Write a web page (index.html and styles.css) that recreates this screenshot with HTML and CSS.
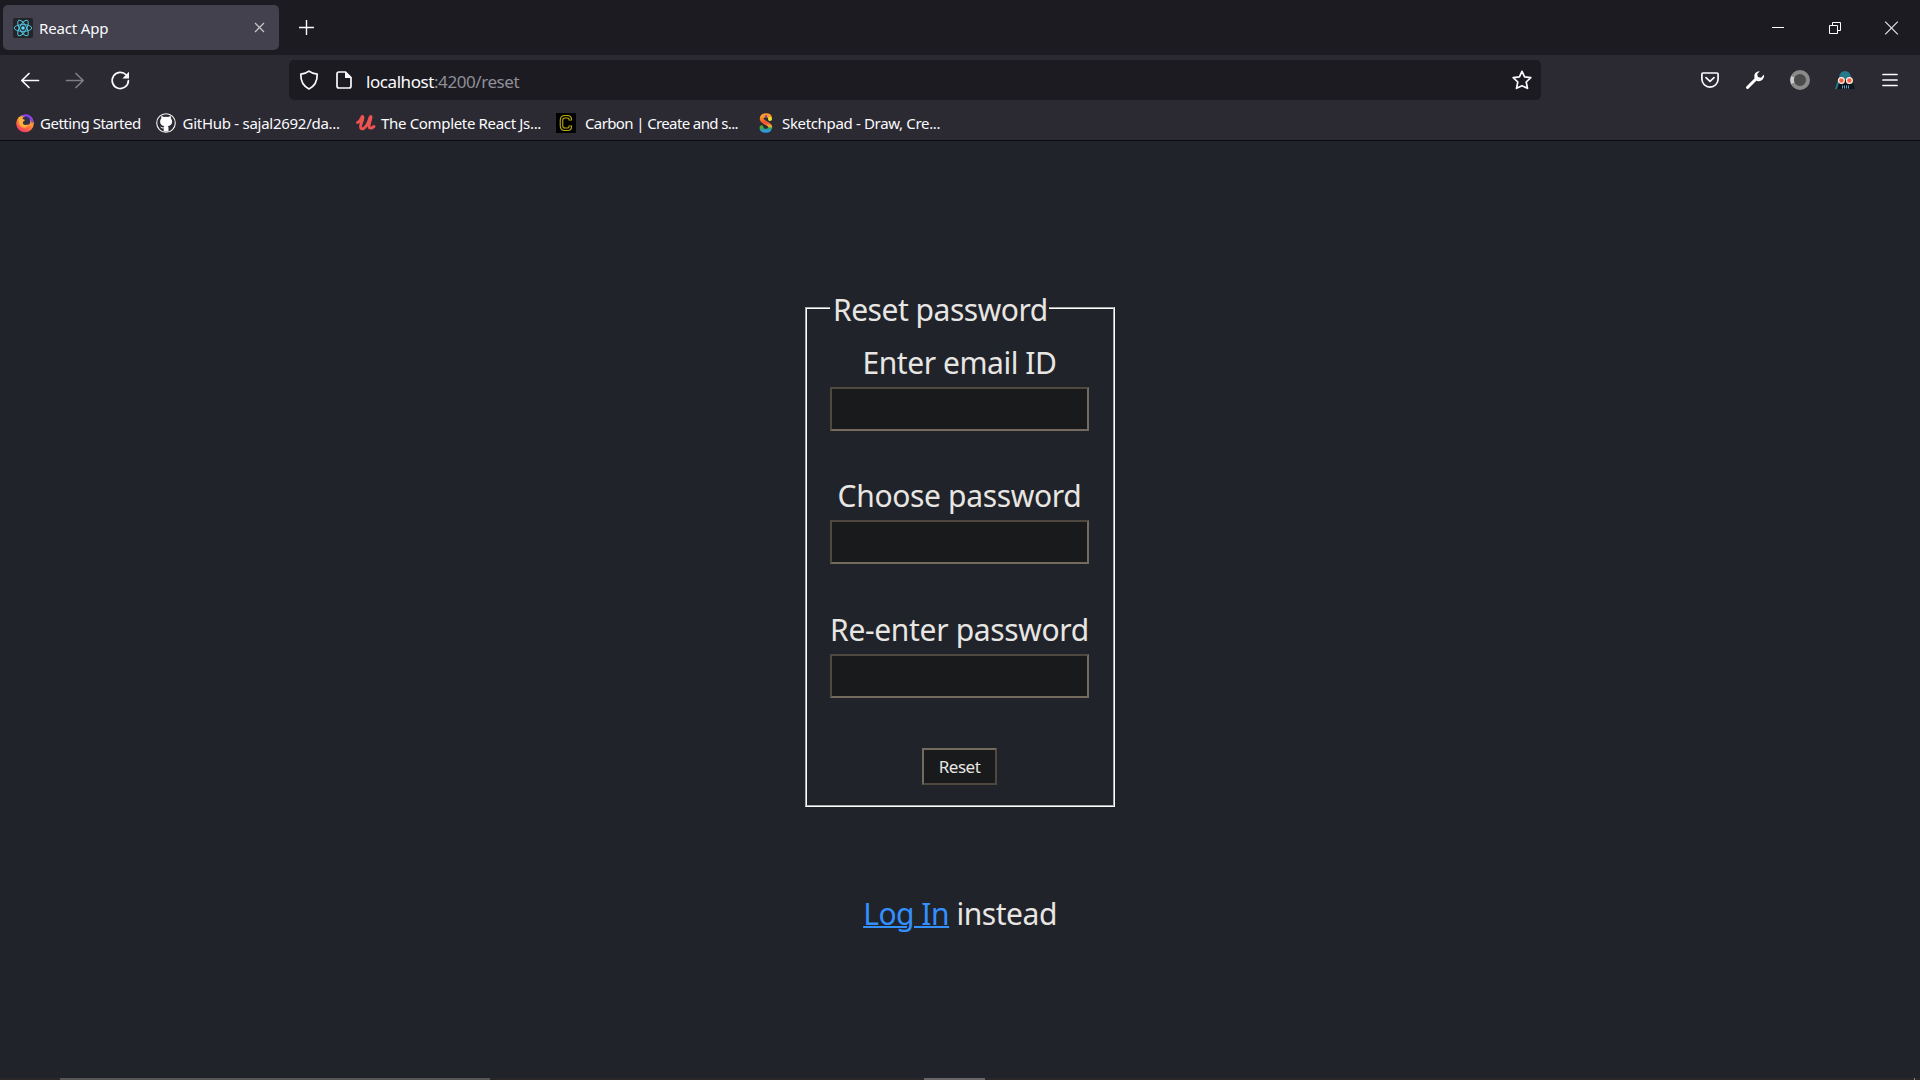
FILE: index.html
```html
<!DOCTYPE html>
<html lang="en">
<head>
<meta charset="utf-8">
<title>React App</title>
<link rel="stylesheet" href="styles.css">
</head>
<body>
<header class="tabs">
  <div class="tab">
    <svg class="i20" viewBox="0 0 20 20"><rect width="20" height="20" rx="2" fill="#222428"/><g fill="none" stroke="#53c1de" stroke-width="1"><ellipse cx="10" cy="10" rx="8.8" ry="3.4"/><ellipse cx="10" cy="10" rx="8.8" ry="3.4" transform="rotate(60 10 10)"/><ellipse cx="10" cy="10" rx="8.8" ry="3.4" transform="rotate(120 10 10)"/></g><circle cx="10" cy="10" r="1.8" fill="#61dafb"/></svg>
    <span class="tab-title">React App</span>
    <svg class="tab-close" viewBox="0 0 11 11"><path d="M1 1l9 9M10 1l-9 9" stroke="#c9c8cf" stroke-width="1.2"/></svg>
  </div>
  <svg class="plus" viewBox="0 0 15 15"><path d="M7.500 0v15M0 7.500h15" stroke="#fbfbfe" stroke-width="1.400"/></svg>
  <div class="window-buttons">
    <svg viewBox="0 0 14 14"><path d="M1 6.500h12" stroke="#fff"/></svg>
    <svg viewBox="0 0 14 14"><path d="M1.500 4.500h8v8h-8zM4.500 4.500v-3h8v8h-3" fill="none" stroke="#fff"/></svg>
    <svg viewBox="0 0 14 14"><path d="M.2 .7l12.600 12.600M12.800 .7L.2 13.300" stroke="#e5e5e8" stroke-width="1.200"/></svg>
  </div>
</header>
<nav class="toolbar">
  <div class="history">
    <svg class="i20" viewBox="0 0 20 20"><path d="M18.500 10.500H2M9 3.500l-7.200 7L9 17.500" class="line"/></svg>
    <svg class="i20 dim" viewBox="0 0 20 20"><path d="M1.500 10.500H18M11 3.500l7.200 7-7.200 7" class="line"/></svg>
    <svg class="i20" viewBox="0 0 20 20"><path d="M16.300 5A8.100 8.100 0 1 0 18.400 10.500" class="line"/><path d="M19 1.800v6.600h-6.600z" fill="#fbfbfe"/></svg>
  </div>
  <div class="url">
    <svg class="i20" viewBox="0 0 20 20"><path d="M10 1.200C7.600 3.200 5 3.800 1.800 4.100C1.600 11 3.800 16 10 18.900C16.200 16 18.400 11 18.200 4.100C15 3.800 12.400 3.200 10 1.200z" class="line"/></svg>
    <svg class="i20 page-icon" viewBox="0 0 20 20"><path d="M5 2h6.500L17 7.500V16a2 2 0 0 1-2 2H5a2 2 0 0 1-2-2V4a2 2 0 0 1 2-2z" class="line"/><path d="M11 1.500V8h6.500z" fill="#fbfbfe"/></svg>
    <span class="address"><b>localhost</b>:4200/reset</span>
    <svg class="i20 star" viewBox="0 0 20 20"><path d="M10 1.300l2.600 5.600 6.200.8-4.600 4.300 1.300 6.300L10 15.800l-5.500 2.500L5.800 12 1.200 7.700l6.200-.8z" class="line"/></svg>
  </div>
  <div class="actions">
    <svg class="i20" viewBox="0 0 20 20"><path d="M3 3h14q1.100 0 1.100 1.100V9a8.100 8.100 0 0 1-16.200 0V4.100Q1.900 3 3 3z" class="line"/><path d="M6 7.700l4 3.700 4-3.700" class="line"/></svg>
    <svg class="i20" viewBox="0 0 20 20"><path d="M2.500 17.500L11 9" stroke="#fff" stroke-width="3" stroke-linecap="round"/><path d="M14.800 1.200a5.200 5.200 0 0 0-5.400 6.700L12 11a5.400 5.400 0 0 0 7-6.500l-3 3.200-3.100-.8-.7-3z" fill="#fff"/></svg>
    <svg class="i20" viewBox="0 0 20 20"><circle cx="10" cy="10" r="8" fill="#4b4b4b" stroke="#8a8a8a" stroke-width="4"/><path d="M2.700 6.800a8 8 0 0 0 0 6.400" fill="none" stroke="#ccc" stroke-width="3.500"/></svg>
    <svg class="i20" viewBox="0 0 20 20"><path d="M4 7L0 19h20L16 7z" fill="#11181d"/><path d="M4 7Q5 1 10 1t6 6v3H4zM3.500 8L0 19h2L5 10z" fill="#28788c"/><path d="M5 13h10l2 6H4z" fill="#0d1720"/><circle cx="6.400" cy="10.500" r="2.900" fill="#f4613f" stroke="#fff3e8" stroke-width="1.200"/><circle cx="14.400" cy="10.500" r="2.900" fill="#f4613f" stroke="#fff3e8" stroke-width="1.200"/><path d="M7.500 15.500v3M9.500 15.500v3M11.500 15.500v3M13.500 15.500v3" stroke="#6eb6c8" stroke-width=".9"/></svg>
    <svg class="i20" viewBox="0 0 20 20"><path d="M3 4.500h14M3 10h14M3 15.500h14" class="line"/></svg>
  </div>
</nav>
<nav class="bookmarks">
  <a class="bookmark b1"><svg class="i20" viewBox="0 0 20 20"><defs><linearGradient id="fox" x1=".8" y1="0" x2=".3" y2="1"><stop offset="0" stop-color="#ffde4a"/><stop offset=".5" stop-color="#ff8b35"/><stop offset="1" stop-color="#f5316b"/></linearGradient></defs><circle cx="10" cy="10.500" r="8.800" fill="url(#fox)"/><path d="M6 3.500C9 0 15 .3 17.500 5.500c1 2.500.5 4-.5 5.500C16 5 11 3 6 3.500z" fill="#8b3df0"/><circle cx="10.800" cy="8.200" r="4.600" fill="#33304a"/><path d="M4 4c2 0 3 1 4 2l2 1-2 2c-1 3 3 4 6 2-2 5-9 5-10-1z" fill="#ffb13a"/></svg><span>Getting Started</span></a>
  <a class="bookmark b2"><svg class="i20" viewBox="0 0 20 20"><circle cx="10" cy="10" r="9.300" fill="#2b2a33" stroke="#f5f5f5" stroke-width="1.100"/><path d="M7.700 18.500v-3.200c-2 .4-2.700-.6-3.500-1.700 1.200-.2 1.500 1.300 3.500.8.1-.6.300-1 .7-1.300-2.500-.4-4.300-1.500-4.300-4.600 0-1.200.4-2.200 1.200-3-.2-.8-.1-1.800.2-2.500 1 .1 1.900.6 2.600 1.100a9 9 0 0 1 4 0c.7-.5 1.600-1 2.600-1.100.3.700.4 1.700.2 2.500.8.8 1.200 1.800 1.200 3 0 3.100-1.800 4.200-4.300 4.600.5.500.7 1 .7 1.900v3.500z" fill="#fff"/></svg><span>GitHub - sajal2692/da...</span></a>
  <a class="bookmark b3"><svg class="i20" viewBox="0 0 20 20"><path d="M1.500 9.500Q4 8.500 5.800 4.200Q6.800 2.400 7 4.300Q6.800 7 4.700 12Q3.800 16.500 7.200 15.800Q11.500 13 14 4.300Q15 2.600 15.100 4.500Q13.500 9.500 13 13Q13.500 17 18 13.500" fill="none" stroke="#ee5350" stroke-width="2.900" stroke-linecap="round" stroke-linejoin="round"/></svg><span>The Complete React Js...</span></a>
  <a class="bookmark b4"><svg class="i20" viewBox="0 0 20 20"><rect width="20" height="20" fill="#000"/><path d="M14.300 7.500V6.500Q14.300 3.700 11.500 3.700H9Q5.500 3.700 5.500 7.200v5.600q0 3.500 3.500 3.500h2.500q2.800 0 2.800-2.800v-1" fill="none" stroke="#b8ab12" stroke-width="3.600"/><path d="M14.300 6.700V6.500Q14.300 3.700 11.500 3.700H9Q5.500 3.700 5.500 7.200v5.600q0 3.500 3.500 3.500h2.500q2.800 0 2.800-2.800v-.2" fill="none" stroke="#090900" stroke-width="1.400"/></svg><span>Carbon | Create and s...</span></a>
  <a class="bookmark b5"><svg class="i20" viewBox="0 0 20 20"><defs><linearGradient id="pad" x2="0" y2="1"><stop offset=".1" stop-color="#ff9b20"/><stop offset=".5" stop-color="#ef4d35"/><stop offset=".7" stop-color="#f3b52c"/><stop offset=".85" stop-color="#28a76a"/><stop offset="1" stop-color="#3195e5"/></linearGradient></defs><path d="M14 5.500Q14 2.300 10 2.300Q5.500 2.300 5.800 6Q6.100 8.200 10 10Q14.500 12 14.200 14.500Q13.600 18 9.500 17.800Q5.500 17.600 5.500 14.500" fill="none" stroke="url(#pad)" stroke-width="4"/><circle cx="14" cy="6" r="2" fill="#e9e334"/><circle cx="5.500" cy="14" r="1.800" fill="#48af38"/><circle cx="10" cy="3.200" r="1.200" fill="#8c45b8"/></svg><span>Sketchpad - Draw, Cre...</span></a>
</nav>
<main class="app">
  <fieldset class="form">
    <legend>Reset password</legend>
    <label class="field"><span>Enter email ID</span><input type="email"></label>
    <label class="field wide"><span>Choose password</span><input type="password"></label>
    <label class="field wide repeat"><span>Re-enter password</span><input type="password"></label>
    <button class="reset">Reset</button>
  </fieldset>
  <p class="switch"><a href="#">Log In</a> <span>instead</span></p>
</main>
<footer class="taskbar"><i class="search"></i><i class="running"></i><i class="corner"></i></footer>
</body>
</html>
```
FILE: styles.css
```css
* { box-sizing: border-box; }
body { margin: 0; width: 1920px; height: 1080px; overflow: hidden; display: flex; flex-direction: column; background: #20232a; color: #fbfbfe; font: 15px/20px "Noto Sans", "Open Sans", sans-serif; }
svg { display: block; flex: none; overflow: visible; }
.i20 { width: 20px; height: 20px; }
.line { fill: none; stroke: #fbfbfe; stroke-width: 1.7; stroke-linecap: round; stroke-linejoin: round; }
.dim { opacity: .4; }
.tabs { height: 55px; flex: none; display: flex; align-items: center; background: #1c1b22; padding-left: 3px; }
.tab { width: 276px; height: 45px; border-radius: 5px; background: #42414d; display: flex; align-items: center; padding: 0 14.5px 0 10px; }
.tab-title { margin-left: 6px; letter-spacing: -.15px; }
.tab-close { width: 11px; height: 11px; margin-left: auto; }
.plus { width: 15px; height: 15px; margin-left: 20px; }
.window-buttons { display: flex; gap: 43px; margin-left: auto; padding-right: 21px; }
.window-buttons svg { width: 14px; height: 14px; }
.toolbar { height: 50px; flex: none; display: flex; align-items: center; background: #2b2a33; }
.history { display: flex; gap: 25px; padding-left: 20px; width: 289px; }
.url { width: 1252px; height: 40px; border-radius: 5px; background: #1c1b22; display: flex; align-items: center; padding: 0 9px 0 10px; }
.page-icon { margin-left: 15px; }
.address { margin-left: 12px; padding-top: 3px; font-size: 17px; letter-spacing: -.43px; color: #8f8f98; }
.address b { font-weight: 400; color: #fbfbfe; }
.star { margin-left: auto; }
.actions { display: flex; gap: 25px; margin-left: 159px; }
.bookmarks { height: 36px; flex: none; display: grid; grid-template-columns: 141px 200px 200px 200px 200px; background: #2b2a33; border-bottom: 1px solid #0c0c0f; padding: 8px 0 0 15px; }
.bookmark { display: flex; gap: 5px; white-space: nowrap; }
.b1 { letter-spacing: -.48px; }
.b2 { letter-spacing: -.27px; gap: 6.5px; }
.b3 { letter-spacing: -.33px; }
.b4 { letter-spacing: -.62px; gap: 9px; }
.b5 { letter-spacing: -.34px; gap: 6px; }
.app { flex: 1; display: flex; flex-direction: column; align-items: center; padding-top: 145px; color: #e8e6e3; font-size: 30px; line-height: 40px; }
.form { width: 310px; margin: 0; padding: 13px 24px 20px 23px; border: 2px groove #fff; display: block; }
legend { padding: 4px 1px 0 3px; white-space: nowrap; letter-spacing: -.48px; }
.field { display: flex; flex-direction: column; align-items: center; white-space: nowrap; margin-bottom: 45px; letter-spacing: -.45px; }
.wide { letter-spacing: -.34px; }
.repeat { margin-top: 46px; }
input { width: 259px; height: 44px; margin-top: 4px; border: 2px solid; border-color: #4f483f #746b5e #746b5e #4f483f; background: #181a1b; }
.reset { display: block; width: 75px; height: 37px; margin: 50px auto 0; padding: 0; border: 2px solid; border-color: #746b5e #4f483f #4f483f #746b5e; background: #181a1b; color: #e8e6e3; font: 17px/32px "Noto Sans", sans-serif; letter-spacing: -.5px; }
.switch { margin: 87px 0 0; letter-spacing: -.47px; }
.switch a { color: #3391ff; text-decoration-thickness: 2px; }
.taskbar { height: 2px; flex: none; background: #2b2729; display: flex; }
.search { width: 430px; margin-left: 60px; background: #575656; }
.running { width: 61px; margin-left: 434px; background: #686669; }
.corner { width: 1px; margin-left: 929px; background: #8a8a8a; }
```
